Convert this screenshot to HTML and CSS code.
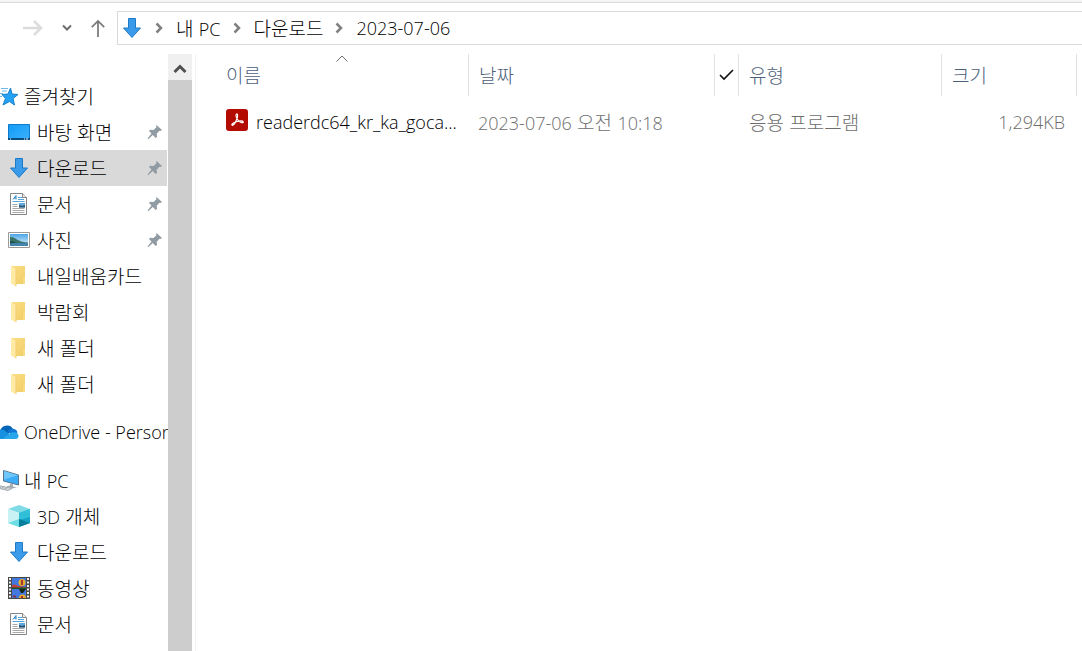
FILE: index.html
```html
<!DOCTYPE html>
<html lang="ko">
<head>
  <meta charset="UTF-8" />
  <meta name="viewport" content="width=device-width, initial-scale=1.0"/>
  <title>2023-07-06</title>
  <link rel="stylesheet" href="styles.css">
</head>
<body>
  <!-- shared icons -->
  <svg class="sprite" aria-hidden="true">
    <defs>
      <linearGradient id="blueFill" x1="0" y1="0" x2="1" y2="1">
        <stop offset="0" stop-color="#129bf5"/><stop offset="1" stop-color="#3db0ff"/>
      </linearGradient>
      <linearGradient id="folderFill" x1="0" y1="0" x2="1" y2="1">
        <stop offset="0" stop-color="#fbdf86"/><stop offset="1" stop-color="#f1cd67"/>
      </linearGradient>
      <linearGradient id="skyFill" x1="0" y1="0" x2="0" y2="1">
        <stop offset="0" stop-color="#4ba5e8"/><stop offset="1" stop-color="#e3f4fb"/>
      </linearGradient>
    </defs>
    <symbol id="down" viewBox="0 0 22 22">
      <path d="M7.500 1.500h7v9.500h5L11 20.500 2.500 11h5z" fill="#3a9bea" stroke="#1f7ac8"/>
    </symbol>
    <symbol id="star" viewBox="0 0 22 22">
      <path d="M13.500 3l1.500 6 6 .5-5 4 1.500 6.500-5-3.500-6.500 3.500 2.500-6.500-3.500-4 6-.5z" fill="#25a2f4" stroke="#1680cc"/>
      <path d="M4 3.500h7M5 6h5M2 8.500h4M2 11.500h3" stroke="#6fb7e6"/>
    </symbol>
    <symbol id="desktop" viewBox="0 0 22 22">
      <path d="M.5 3.500h21v15H.5z" fill="url(#blueFill)" stroke="#0f7ac9"/>
      <path d="M0 18h22" stroke="#0a4d80" stroke-width="2"/>
      <path d="M2 18h1M16 18h1M18 18h2" stroke="#fff"/>
    </symbol>
    <symbol id="document" viewBox="0 0 22 22">
      <path d="M2.500.5h12l4 4v17h-16z" fill="#fff" stroke="#858585"/>
      <path d="M14.500.5v4h4" fill="#eee" stroke="#858585"/>
      <path d="M5 6.500L8 2.500V6.500M6 5h2" fill="none" stroke="#2385cc"/>
      <path d="M10 4.500h4M10 6.500h6M4.500 8.500h12" stroke="#55a5dc"/>
      <path d="M4.500 11.500h5M4.500 13.500h5M4.500 15.500h12M4.500 17.500h12M4.500 19.500h12" stroke="#a8a8a8"/>
      <path d="M11 10h6v4.500h-6z" fill="#5fa8dc"/>
      <path d="M11 12l3 1 3-1v2.500h-6z" fill="#2a516b"/>
    </symbol>
    <symbol id="picture" viewBox="0 0 22 22">
      <path d="M.5 3.500h21v15H.5z" fill="#fff" stroke="#999"/>
      <path d="M2 5h18v12H2z" fill="url(#skyFill)"/>
      <path d="M2 8c3-.5 6 2 9 3.500 3 1.500 6 1.500 9 2v.5H2z" fill="#397467"/>
      <path d="M2 14h18v3H2z" fill="#4384ae"/>
      <path d="M2 12l7 1.500-7 1z" fill="#1d4c4a"/>
    </symbol>
    <symbol id="folder" viewBox="0 0 22 22">
      <path d="M4 1h13v18H4z" fill="url(#folderFill)"/>
      <path d="M15 12h2v7h-2z" fill="#f8dc84"/>
      <path d="M3 1l5 3v17.500l-5-3z" fill="#ffeaa6"/>
      <path d="M8 4v17" stroke="#f0cf70"/>
    </symbol>
    <symbol id="pin" viewBox="0 0 16 16">
      <path d="M9.500 1l5.500 5-1.500 1-1-.2-2.800 3 .3 3.200-1.300 1-3-3L1.500 15l-1-.5L4.500 9.500 2 7l1-1.300 3.500.3 3-2.800L9 2z" fill="#919ba3"/>
    </symbol>
    <symbol id="cloud" viewBox="0 0 22 22">
      <path d="M3 11a7 7 0 0 1 13-3l-5 5-8 1z" fill="#0364b8"/>
      <path d="M11 9.500c3-3 9-2 9.500 2L14 15z" fill="#0f78d4"/>
      <path d="M-2 18a5 5 0 0 1 4-9c3-1 5 0 7 1.500L18 18z" fill="#1690df"/>
      <path d="M5 18l8-5.500c3-2 8-1.500 8.500 2 .3 2-1 3.500-3 3.500z" fill="#28a8ea"/>
    </symbol>
    <symbol id="computer" viewBox="0 0 22 22">
      <path d="M6.500 1.500l15 4.500v10l-15-4z" fill="#3cadf6" stroke="#58748a"/>
      <path d="M7 2l14 4.200L7 10.500z" fill="#6fc6fb"/>
      <path d="M13 14.500l3 1v2l4 1-5 1-6-2 4-1z" fill="#a4adb3"/>
      <path d="M1 16.500l14 3-4 2L-1 18.500z" fill="#dce1e4" stroke="#a0a8ad"/>
      <path d="M2 18l9 2" stroke="#a0a8ad" stroke-dasharray="2 1"/>
    </symbol>
    <symbol id="cube" viewBox="0 0 22 22">
      <path d="M0 4l11-4 11 4-11 4z" fill="#7fdbe5"/>
      <path d="M0 4l11 4v14L0 18z" fill="#c8f2f3"/>
      <path d="M11 8l11-4v14l-11 4z" fill="#12a5c8"/>
      <path d="M11 8l11-4v8l-11 3z" fill="#31bfd8"/>
      <path d="M11 14l11 4-11 4z" fill="#087f9b"/>
      <path d="M0 18l11-4v8z" fill="#6bdde3"/>
    </symbol>
    <symbol id="film" viewBox="0 0 22 22">
      <path d="M0 0h22v22H0z" fill="#494949"/>
      <path d="M2 1v21M20 1v21" stroke="#eee" stroke-width="2" stroke-dasharray="2 1.500"/>
      <path d="M4 1h14v20H4z" fill="#4378df"/>
      <circle cx="14" cy="5.500" r="3.500" fill="#e7ad27"/>
      <path d="M13 3h2v5h-2z" fill="#a83838"/>
      <path d="M4 9c2-3 4-1 6 0l8 1v1H4z" fill="#c33d3d"/>
      <path d="M4 10.500h14v1.500H4z" fill="#14552b"/>
      <path d="M11 12h7l-3 4h-2z" fill="#17251b"/>
      <path d="M11 21a3.500 3.500 0 0 1 7 0z" fill="#e7ad27"/>
      <path d="M13 19h2v2h-2z" fill="#b02f2f"/>
      <path d="M5 19l3 1" stroke="#7b3a5c" stroke-width="2"/>
    </symbol>
    <symbol id="next" viewBox="0 0 8 12">
      <path d="M1.500 1.500L6 6l-4.500 4.500" fill="none" stroke="#808080" stroke-width="2.500"/>
    </symbol>
  </svg>

  <header class="toolbar">
    <button class="tool forward" aria-label="앞으로" disabled>
      <svg width="20" height="18" viewBox="0 0 20 18"><path d="M0 9h18M11 2l7 7-7 7" fill="none" stroke="#dcdcdc" stroke-width="2.500"/></svg>
    </button>
    <button class="tool recent" aria-label="최근 위치">
      <svg width="10" height="8" viewBox="0 0 10 8"><path d="M1 1.500l4 4 4-4" fill="none" stroke="#6e6e6e" stroke-width="2"/></svg>
    </button>
    <button class="tool up" aria-label="위로">
      <svg width="18" height="20" viewBox="0 0 18 20"><path d="M9 20V2M2 9l7-7 7 7" fill="none" stroke="#7b7b7b" stroke-width="2"/></svg>
    </button>
    <nav class="address" aria-label="주소">
      <svg class="icon"><use href="#down"/></svg>
      <svg class="next"><use href="#next"/></svg>
      <a href="#pc">내 <span class="latin">PC</span></a>
      <svg class="next"><use href="#next"/></svg>
      <a href="#downloads">다운로드</a>
      <svg class="next"><use href="#next"/></svg>
      <a href="#files" class="latin">2023-07-06</a>
    </nav>
  </header>

  <div class="window">
    <nav class="sidebar" aria-label="탐색 창">
      <ul>
        <li><a class="root" href="#quick"><svg class="icon"><use href="#star"/></svg>즐겨찾기</a></li>
        <li><a href="#desk"><svg class="icon"><use href="#desktop"/></svg>바탕 화면<svg class="pin"><use href="#pin"/></svg></a></li>
        <li><a class="selected" href="#downloads"><svg class="icon"><use href="#down"/></svg>다운로드<svg class="pin"><use href="#pin"/></svg></a></li>
        <li><a href="#docs"><svg class="icon"><use href="#document"/></svg>문서<svg class="pin"><use href="#pin"/></svg></a></li>
        <li><a href="#photos"><svg class="icon"><use href="#picture"/></svg>사진<svg class="pin"><use href="#pin"/></svg></a></li>
        <li><a href="#card"><svg class="icon"><use href="#folder"/></svg>내일배움카드</a></li>
        <li><a href="#fair"><svg class="icon"><use href="#folder"/></svg>박람회</a></li>
        <li><a href="#new1"><svg class="icon"><use href="#folder"/></svg>새 폴더</a></li>
        <li><a href="#new2"><svg class="icon"><use href="#folder"/></svg>새 폴더</a></li>
      </ul>
      <ul>
        <li><a class="root latin" href="#onedrive"><svg class="icon"><use href="#cloud"/></svg>OneDrive - Person</a></li>
      </ul>
      <ul id="pc">
        <li><a class="root" href="#pc"><svg class="icon"><use href="#computer"/></svg><span>내 <span class="latin">PC</span></span></a></li>
        <li><a href="#objects"><svg class="icon"><use href="#cube"/></svg><span><span class="latin">3D</span> 개체</span></a></li>
        <li><a href="#downloads"><svg class="icon"><use href="#down"/></svg>다운로드</a></li>
        <li><a href="#videos"><svg class="icon"><use href="#film"/></svg>동영상</a></li>
        <li><a href="#docs"><svg class="icon"><use href="#document"/></svg>문서</a></li>
      </ul>
    </nav>

    <div class="scrollbar">
      <button aria-label="위로 스크롤">
        <svg width="14" height="10" viewBox="0 0 14 10"><path d="M1.500 8L7 2.500 12.500 8" fill="none" stroke="#505050" stroke-width="3"/></svg>
      </button>
      <div class="thumb"></div>
    </div>

    <main id="files">
      <table>
        <thead>
          <tr>
            <th class="name">이름
              <svg class="sort" width="12" height="7" viewBox="0 0 12 7"><path d="M.5 6.500L6 1l5.500 5.500" fill="none" stroke="#6d6d6d"/></svg>
            </th>
            <th class="date">날짜</th>
            <th class="check" aria-label="상태">
              <svg width="16" height="12" viewBox="0 0 16 12"><path d="M1 6l4 4L14 1" fill="none" stroke="#111" stroke-width="1.600"/></svg>
            </th>
            <th class="type">유형</th>
            <th class="size">크기</th>
          </tr>
        </thead>
        <tbody>
          <tr>
            <td class="name">
              <a href="#readerdc64" class="file">
                <svg class="pdf" viewBox="0 0 22 22">
                  <rect width="22" height="22" rx="3" fill="#b30b00"/>
                  <path d="M10.500 5c1.300-.5 1.400 2 .5 4.500-1 2.800-3 6.500-4.500 6.800-1.600 0-.5-2.300 3-3.300 3-.9 7.300-1.400 7.800 0 .3 1.300-2.800.6-4.800-1.200-2-1.800-3.300-6.300-2-6.800z" fill="none" stroke="#fff" stroke-width="1.200"/>
                </svg>
                <span class="latin">readerdc64_kr_ka_goca...</span>
              </a>
            </td>
            <td class="date"><span class="latin">2023-07-06</span> 오전 <span class="latin">10:18</span></td>
            <td></td>
            <td class="type">응용 프로그램</td>
            <td class="size latin">1,294KB</td>
          </tr>
        </tbody>
      </table>
    </main>
  </div>
</body>
</html>
```
FILE: styles.css
```css
*,
*::before,
*::after {
  margin: 0;
  padding: 0;
  box-sizing: border-box;
}

body {
  height: 100vh;
  display: flex;
  flex-direction: column;
  overflow: hidden;
  background-color: #fff;
  color: #000;
  font-family: "Noto Sans CJK KR", sans-serif;
  font-size: 19px;
  font-weight: 300;
  line-height: 24px;
  border-top: 2px solid #f3f4f6;
}

.sprite {
  position: absolute;
  width: 0;
  height: 0;
}

a {
  color: inherit;
  text-decoration: none;
}

button {
  border: none;
  background: none;
  display: flex;
  align-items: center;
  justify-content: center;
}

.latin {
  font-family: "Open Sans", "Noto Sans CJK KR", sans-serif;
  font-size: 18px;
  font-weight: 300;
}

.icon {
  width: 22px;
  height: 22px;
  flex: none;
}

/* toolbar */
.toolbar {
  display: flex;
  flex: none;
  height: 52px;
  padding: 8px 0 9px;
  border-top: 1px solid #d9dadc;
}

.tool {
  height: 34px;
}

.forward {
  width: 44px;
  padding-left: 22px;
}

.recent {
  width: 46px;
}

.up {
  width: 16px;
  margin-right: 11px;
}

.address {
  flex: 1;
  display: flex;
  align-items: center;
  height: 34px;
  padding-left: 3px;
  border: 1px solid #d9d9d9;
  border-right: none;
}

.next {
  width: 8px;
  height: 12px;
  margin: 0 13px 0 12px;
  flex: none;
}

/* navigation pane */
.window {
  flex: 1;
  display: flex;
  min-height: 0;
}

.sidebar {
  width: 168px;
  padding-top: 24px;
  flex: none;
  overflow: hidden;
}

.sidebar ul {
  list-style: none;
  margin-bottom: 12px;
}

.sidebar a {
  display: flex;
  align-items: center;
  gap: 7px;
  height: 36px;
  margin-right: 1px;
  padding-left: 8px;
  white-space: nowrap;
}

.sidebar .root {
  gap: 5px;
  margin-left: -3px;
  margin-right: 0;
  padding-left: 0;
}

.sidebar .selected {
  background-color: #d9d9d9;
}

.pin {
  width: 16px;
  height: 16px;
  margin-left: auto;
  margin-right: 4px;
}

.scrollbar {
  display: flex;
  flex-direction: column;
  flex: none;
  width: 24px;
}

.scrollbar button {
  height: 26px;
  padding-top: 4px;
  background-color: #f0f0f0;
}

.thumb {
  flex: 1;
  background-color: #cdcdcd;
}

/* file list */
main {
  flex: 1;
  min-width: 0;
  margin-left: 3px;
  padding: 0 5px 0 20px;
  border-left: 1px solid #f3f3f3;
}

table {
  width: 100%;
  table-layout: fixed;
  border-collapse: separate;
  border-spacing: 0;
}

th {
  position: relative;
  height: 42px;
  padding-left: 10px;
  border-right: 1px solid #e2e2e2;
  color: #4c607a;
  font-weight: 300;
  text-align: left;
}

td {
  height: 52px;
  padding-left: 10px;
  color: #6d6d6d;
  white-space: nowrap;
}

th.date {
  width: 246px;
}

td.date {
  padding-left: 9px;
}

th.check {
  width: 24px;
  padding: 0;
  text-align: center;
}

.check svg {
  display: block;
  margin: auto;
}

th.type {
  width: 203px;
}

th.size {
  width: 135px;
}

td.size {
  padding-right: 12px;
  text-align: right;
}

.sort {
  position: absolute;
  top: 1px;
  left: 50%;
  margin-left: -6px;
}

.file {
  display: flex;
  align-items: center;
  gap: 8px;
  color: #000;
}

.pdf {
  width: 22px;
  height: 22px;
  margin-bottom: 5px;
  flex: none;
}
```
